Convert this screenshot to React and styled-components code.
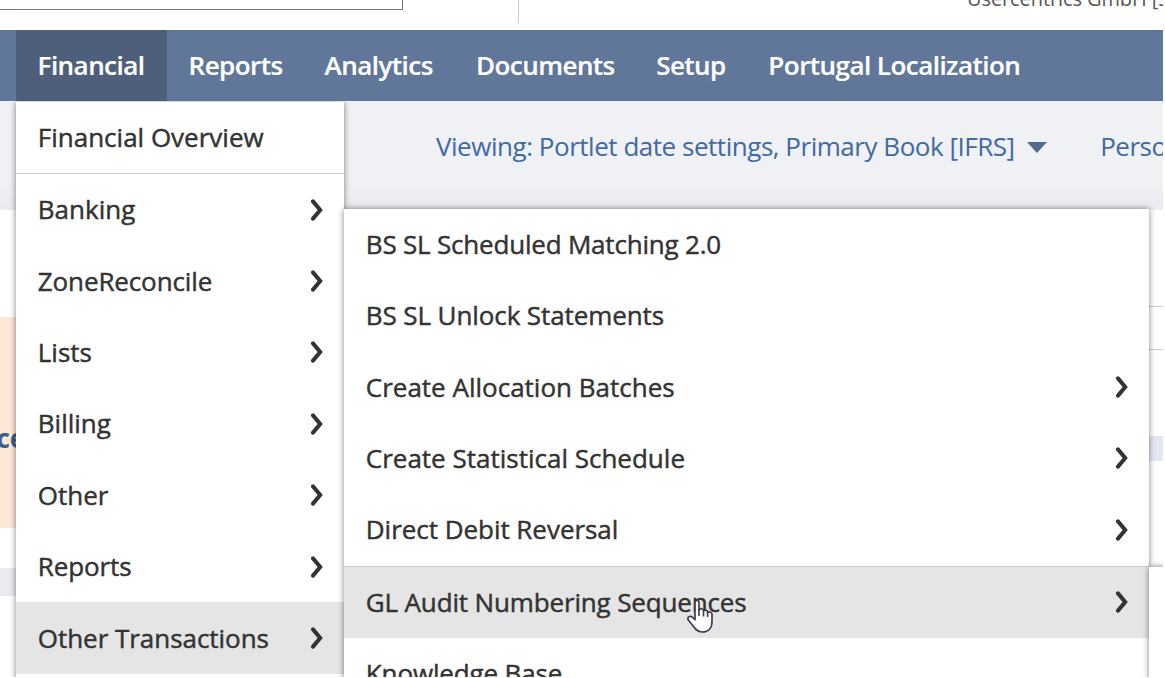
import React from "react";
import styled, { createGlobalStyle } from "styled-components";

const GlobalStyle = createGlobalStyle`
  * { box-sizing: border-box; }
  body {
    margin: 0;
    background: #fff;
    overflow: hidden;
    font-family: "Open Sans", "Noto Sans", sans-serif;
  }
`;

const Page = styled.div`
  position: relative;
  width: 1163px;
  height: 677px;
  overflow: hidden;
  background: #eff1f5;
  display: flex;
  flex-direction: column;
`;

const Header = styled.header`
  height: 30px;
  flex: none;
  display: flex;
  align-items: flex-start;
  background: #fff;
  overflow: hidden;
`;

const SearchBox = styled.div`
  width: 403px;
  flex: none;
  height: 10px;
  border: solid #777;
  border-width: 0 1px 1px 0;
`;

const HeaderDivider = styled.div`
  width: 1px;
  flex: none;
  height: 23px;
  margin-left: 115px;
  background: #c8c8c8;
`;

const AccountName = styled.span`
  margin: -15px 0 0 448px;
  flex: none;
  font-size: 20px;
  line-height: 28px;
  letter-spacing: -0.1px;
  white-space: nowrap;
  color: #555;
`;

const NavBar = styled.nav`
  height: 71px;
  flex: none;
  display: flex;
  padding-left: 16px;
  background: #607799;
`;

const NavItem = styled.a`
  width: ${(p) => p.$w}px;
  flex: none;
  padding-left: 21.6px;
  font-size: 26px;
  font-weight: 600;
  line-height: 71px;
  white-space: nowrap;
  letter-spacing: -0.54px;
  -webkit-text-stroke: 0.2px #fff;
  color: #fff;
  background: ${(p) => (p.$active ? "#4d5f7a" : "transparent")};
`;

const Settings = styled.div`
  height: 109px;
  flex: none;
  display: flex;
  align-items: center;
  padding: 0 0 19px 436px;
  background: linear-gradient(#eff1f5 75%, #e9ebf0);
`;

const SettingLink = styled.a`
  flex: none;
  font-size: 26px;
  line-height: 36px;
  letter-spacing: -0.47px;
  white-space: nowrap;
  color: #4169a3;
`;

const Caret = styled.span`
  flex: none;
  margin: 3px 53.5px 0 12px;
  border: solid transparent;
  border-width: 11px 10.5px 0;
  border-top-color: #54698d;
`;

const Portlets = styled.main`
  flex: 1;
  display: grid;
  grid-template-columns: 600px 1fr;
  grid-template-rows: 358px 1fr;
  row-gap: 28px;
  background: #e9ebf0;
`;

const Portlet = styled.section`
  background: #fff;
  overflow: hidden;
`;

const Reminder = styled.div`
  margin-top: 107px;
  height: 211px;
  padding-top: 103px;
  background: #fde8d8;
  color: #3c5f8d;
  font-size: 26px;
  font-weight: 700;
  line-height: 36px;
  text-indent: -3.5px;
`;

const FilterRow = styled.div`
  margin-top: 96px;
  height: 44px;
  border: solid #ccc;
  border-width: 1px 0;
`;

const ChartBand = styled.div`
  margin-top: 86px;
  height: 25px;
  background: #e3e9f3;
`;

const Menu = styled.div`
  position: absolute;
  left: ${(p) => p.$x}px;
  top: ${(p) => p.$y}px;
  width: ${(p) => p.$w}px;
  height: 620px;
  background: #fff;
  box-shadow: 0 0 6px rgba(0, 0, 0, 0.5);
  clip-path: inset(${(p) => (p.$attached ? 0 : -8)}px -8px -8px -8px);
`;

const MenuItem = styled.div`
  height: ${(p) => (p.$ruled ? 72.4 : 71.4)}px;
  display: flex;
  align-items: center;
  justify-content: space-between;
  padding: 0 20.6px 0 21.8px;
  background: ${(p) => (p.$active ? "#e5e5e5" : "transparent")};
  border: solid #ccc;
  border-width: ${(p) => (p.$ruled === "top" ? "1px 0 0" : p.$ruled ? "0 0 1px" : "0")};
`;

const Label = styled.span`
  padding-bottom: 0.8px;
  font-size: 26px;
  line-height: 36px;
  white-space: nowrap;
  letter-spacing: ${(p) => p.$ls || 0}px;
  -webkit-text-stroke: 0.45px #333;
  color: #333;
`;

const ChevronSvg = styled.svg`
  width: 13px;
  height: 22px;
  flex: none;
`;

const Chevron = () => (
  <ChevronSvg viewBox="0 0 13 22">
    <path
      d="M3 2.4 L10.2 11 L3 19.6"
      fill="none"
      stroke="#333"
      strokeWidth="4"
      strokeLinecap="round"
    />
  </ChevronSvg>
);

const Pointer = styled.svg`
  position: absolute;
  left: 686px;
  top: 599px;
  width: 28px;
  height: 35px;
`;

const nav = [
  ["Financial", 151],
  ["Reports", 136],
  ["Analytics", 151.4],
  ["Documents", 180.2],
  ["Setup", 112.2],
  ["Portugal Localization", 300],
];

const financial = [
  { text: "Financial Overview", ruled: "bottom", leaf: true },
  { text: "Banking" },
  { text: "ZoneReconcile", ls: -0.12 },
  { text: "Lists" },
  { text: "Billing" },
  { text: "Other" },
  { text: "Reports", ls: -0.1 },
  { text: "Other Transactions", active: true, ls: -0.04 },
];

const transactions = [
  { text: "BS SL Scheduled Matching 2.0", leaf: true, ls: -0.2 },
  { text: "BS SL Unlock Statements", leaf: true, ls: -0.1 },
  { text: "Create Allocation Batches" },
  { text: "Create Statistical Schedule" },
  { text: "Direct Debit Reversal", ls: -0.04 },
  { text: "GL Audit Numbering Sequences", ruled: "top", active: true, ls: -0.15 },
  { text: "Knowledge Base", leaf: true, ls: -0.14 },
];

const MenuItems = ({ items }) =>
  items.map((i) => (
    <MenuItem key={i.text} $ruled={i.ruled} $active={i.active}>
      <Label $ls={i.ls}>{i.text}</Label>
      {!i.leaf && <Chevron />}
    </MenuItem>
  ));

export default function App() {
  return (
    <>
      <GlobalStyle />
      <Page>
        <Header>
          <SearchBox />
          <HeaderDivider />
          <AccountName>Usercentrics GmbH [S</AccountName>
        </Header>
        <NavBar>
          {nav.map(([text, w], i) => (
            <NavItem key={text} $w={w} $active={i === 0}>
              {text}
            </NavItem>
          ))}
        </NavBar>
        <Settings>
          <SettingLink>Viewing: Portlet date settings, Primary Book [IFRS]</SettingLink>
          <Caret />
          <SettingLink>Perso</SettingLink>
        </Settings>
        <Portlets>
          <Portlet>
            <Reminder>ce</Reminder>
          </Portlet>
          <Portlet>
            <FilterRow />
            <ChartBand />
          </Portlet>
          <Portlet />
          <Portlet />
        </Portlets>
        <Menu $x={16} $y={101.5} $w={327.5} $attached>
          <MenuItems items={financial} />
        </Menu>
        <Menu $x={344} $y={208.6} $w={805}>
          <MenuItems items={transactions} />
        </Menu>
        <Menu $x={1149} $y={566.5} $w={300} />
        <Pointer viewBox="0 0 28 35">
          <path
            d="M9 3.5 C9 0.8 13 0.8 13 3.5 V11 C14 9 17.4 9.4 17.5 12 C18.8 10.3 21.5 11 21.6 13.4 C23.4 12.3 26 13.2 26 15.6 V22.5 C26 29 22.5 33 16.5 33 C12 33 9.5 30.5 7.5 27.5 L2.2 20.8 C0.6 18 4.4 16 6.6 18.4 L9 20.6 Z"
            fill="#fff"
            stroke="#3a3d52"
            strokeWidth="1.7"
            strokeLinejoin="round"
          />
          <path d="M13 10 V17 M17.5 12 V17.5 M21.6 13.5 V18" stroke="#3a3d52" strokeWidth="1.6" fill="none" />
        </Pointer>
      </Page>
    </>
  );
}
